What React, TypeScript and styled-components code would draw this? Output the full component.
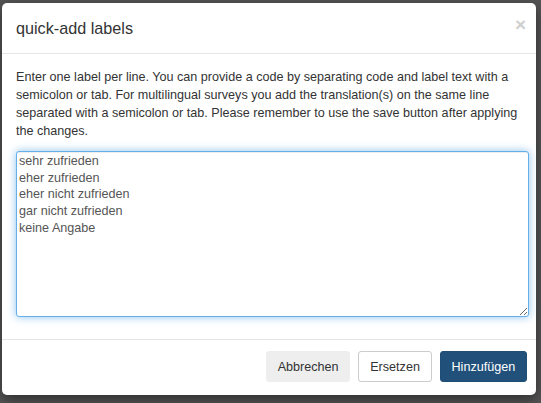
import styled, { createGlobalStyle } from "styled-components";

const GlobalStyle = createGlobalStyle`
  html, body {
    margin: 0;
    padding: 0;
    background: #555;
    font-family: "Liberation Sans", Arial, sans-serif;
  }
`;

const Backdrop = styled.div`
  width: 541px;
  height: 403px;
  padding: 3px 5px 8px 2px;
  box-sizing: border-box;
  background: #555;
`;

const Dialog = styled.div`
  background: #fff;
  border-radius: 5px;
  box-shadow: 0 4px 14px rgba(0, 0, 0, 0.5);
  height: 392px;
  display: flex;
  flex-direction: column;
  color: #333;
`;

const Header = styled.div`
  display: flex;
  align-items: center;
  justify-content: space-between;
  height: 50px;
  padding: 0 10px 0 14px;
  border-bottom: 1px solid #e5e5e5;
`;

const Title = styled.h4`
  margin: 0;
  font-size: 16.2px;
  font-weight: normal;
  color: #333;
`;

const Close = styled.span`
  font-size: 19px;
  font-weight: bold;
  color: #cfcfcf;
  line-height: 1;
  margin-top: -8px;
`;

const Body = styled.div`
  flex: 1;
  padding: 14px 7px 0 14px;
`;

const Intro = styled.p`
  margin: 0 0 11px;
  font-size: 12.6px;
  line-height: 18px;
`;

const LabelInput = styled.textarea`
  display: block;
  width: 513px;
  height: 166px;
  box-sizing: border-box;
  padding: 1px 2px 0;
  margin: 0;
  border: 1px solid #66afe9;
  border-radius: 3px;
  outline: none;
  box-shadow: inset 0 1px 1px rgba(0, 0, 0, 0.075), 0 0 8px rgba(102, 175, 233, 0.75);
  font-family: "Liberation Sans", Arial, sans-serif;
  font-size: 12.6px;
  line-height: 16.7px;
  color: #555;
  resize: vertical;
`;

const Footer = styled.div`
  display: flex;
  justify-content: flex-end;
  gap: 8px;
  padding: 11px 9px 13px 14px;
  border-top: 1px solid #e5e5e5;
`;

const Button = styled.button<{ $variant: "muted" | "outline" | "primary" }>`
  height: 31px;
  padding: 0 10.8px;
  border-radius: 3px;
  font-family: "Liberation Sans", Arial, sans-serif;
  font-size: 12.6px;
  cursor: pointer;
  border: 1px solid
    ${(p) => (p.$variant === "outline" ? "#ccc" : p.$variant === "primary" ? "#204d74" : "#eee")};
  background: ${(p) =>
    p.$variant === "primary" ? "#21507a" : p.$variant === "muted" ? "#eee" : "#fff"};
  color: ${(p) => (p.$variant === "primary" ? "#fff" : "#333")};
`;

const labels = [
  "sehr zufrieden",
  "eher zufrieden",
  "eher nicht zufrieden",
  "gar nicht zufrieden",
  "keine Angabe",
].join("\n");

export default function App() {
  return (
    <>
      <GlobalStyle />
      <Backdrop>
        <Dialog>
          <Header>
            <Title>quick-add labels</Title>
            <Close>×</Close>
          </Header>
          <Body>
            <Intro>
              Enter one label per line. You can provide a code by separating code and label text with a
              semicolon or tab. For multilingual surveys you add the translation(s) on the same line
              separated with a semicolon or tab. Please remember to use the save button after applying
              the changes.
            </Intro>
            <LabelInput defaultValue={labels} spellCheck={false} />
          </Body>
          <Footer>
            <Button $variant="muted">Abbrechen</Button>
            <Button $variant="outline">Ersetzen</Button>
            <Button $variant="primary">Hinzufügen</Button>
          </Footer>
        </Dialog>
      </Backdrop>
    </>
  );
}
